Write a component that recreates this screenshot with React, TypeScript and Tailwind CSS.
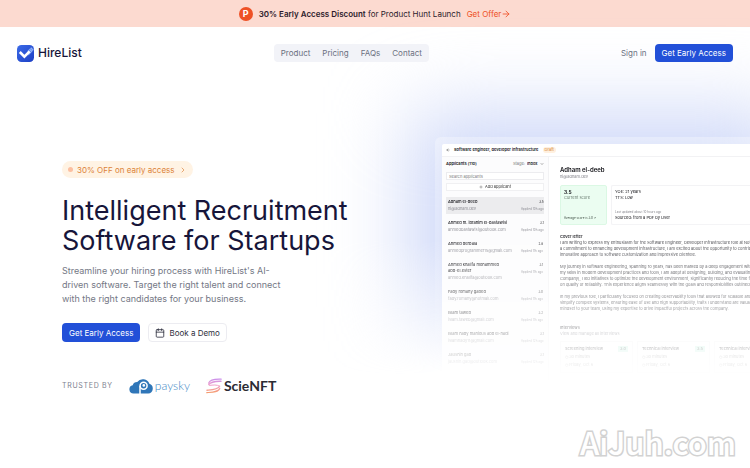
import { ArrowLeft, ArrowRight, Calendar, ChevronDown, ChevronRight, Plus } from "lucide-react";

type Applicant = {
  name: string;
  email: string;
  score: string;
  applied: string;
  active?: boolean;
};

const navLinks = ["Product", "Pricing", "FAQs", "Contact"];

const applicants: Applicant[] = [
  { name: "Adham el-deeb", email: "hi@adham.dev", score: "3.5", applied: "Applied 10h ago", active: true },
  { name: "Ahmed m. ibrahim el-bastawisi", email: "ahmedbastawisi@outlook.com", score: "3.1", applied: "Applied 10h ago" },
  { name: "Ahmed derbala", email: "ahmedprogrammer15@gmail.com", score: "2.8", applied: "Applied 11h ago" },
  { name: "Ahmed khalifa mohammed abd-el.ester", email: "ahmed.khalifa@outlook.com", score: "3.1", applied: "Applied 11h ago" },
  { name: "Fady romany gabed", email: "fady.romany@hotmail.com", score: "3.0", applied: "Applied 11h ago" },
  { name: "Islam taweb", email: "islam.taweb@gmail.com", score: "3.2", applied: "Applied 11h ago" },
  { name: "Islam nady manious abd el-hadi", email: "islamnady11@gmail.com", score: "3.1", applied: "Applied 12h ago" },
  { name: "Jaushin gad", email: "jaushin.gad@outlook.com", score: "3.1", applied: "Applied 12h ago" },
];

const coverLetter = [
  [
    "I am writing to express my enthusiasm for the Software Engineer, Developer Infrastructure role at Notion",
    "a commitment to enhancing development infrastructure, I am excited about the opportunity to contribute",
    "innovative approach to software customization and impressive clientele.",
  ],
  [
    "My journey in software engineering, spanning 10 years, has been marked by a deep engagement with",
    "my skills in modern development practices and tools, I am adept at designing, building, and evaluating",
    "Company), I led initiatives to optimize the development environment, significantly reducing the time from",
    "on quality or reliability. This experience aligns seamlessly with the goals and responsibilities outlined for",
  ],
  [
    "In my previous role, I particularly focused on creating observability tools that allowed for scalable and",
    "simplify complex systems, ensuring ease of use and high supportability, traits I understand are valuable",
    "mindset to your team, using my expertise to drive impactful projects across the company.",
  ],
];

const interviews = [
  { title: "Screening interview", score: "3.0" },
  { title: "Technical interview", score: "3.5" },
  { title: "Technical interview", score: "3.5" },
];

function HireListLogo() {
  return (
    <svg viewBox="0 0 17 17" className="size-[17px]" aria-hidden="true">
      <defs>
        <linearGradient id="brand" x1="0" y1="0" x2="1" y2="1">
          <stop offset="0" stopColor="#3b6be8" />
          <stop offset="1" stopColor="#1d3fc4" />
        </linearGradient>
      </defs>
      <rect width="17" height="17" rx="4.5" fill="url(#brand)" />
      <path d="M10.5 6 14.2 2.2 16.8 4.8 11.5 10.5z" fill="#8fb0f7" />
      <path d="M2.8 7 7.4 11.6 12.6 6.4" fill="none" stroke="#fff" strokeWidth="2.6" />
      <path d="M12.6 3l2.6 2.6M11.3 4.4l2.6 2.6" stroke="#3b6be8" strokeWidth=".6" />
    </svg>
  );
}

function PayskyLogo() {
  return (
    <div className="flex items-center gap-0.5 text-[#3c86c4]">
      <svg viewBox="0 0 24 15" className="h-[15px] w-6" aria-hidden="true">
        <path
          d="M4.5 14.5a4.2 4.2 0 0 1-.8-8.3A4.6 4.6 0 0 1 8.2 3 7 7 0 0 1 20.4 4.8a5 5 0 0 1-1.2 9.7z"
          fill="#2f76b8"
        />
        <path d="M11 15V6.8" stroke="#fff" strokeWidth="1.5" />
        <circle cx="14.6" cy="6.8" r="3.5" fill="none" stroke="#fff" strokeWidth="1.5" />
        <circle cx="14.8" cy="6.4" r="1.3" fill="#fff" />
      </svg>
      <span className="font-['Lato',sans-serif] text-[12px] leading-4 font-light">paysky</span>
    </div>
  );
}

function ScieNftLogo() {
  return (
    <div className="flex items-center gap-0.5 text-[#2b2b33]">
      <svg viewBox="0 0 16 16" className="size-4" fill="none" aria-hidden="true">
        <defs>
          <linearGradient id="swoosh" x1="0" y1="0" x2="0" y2="16" gradientUnits="userSpaceOnUse">
            <stop offset="0" stopColor="#c58cf0" />
            <stop offset=".5" stopColor="#f3a0c4" />
            <stop offset="1" stopColor="#f59a5c" />
          </linearGradient>
        </defs>
        <g stroke="url(#swoosh)" strokeLinecap="round">
          <path d="M15.2 1.2C10 1 4 1 2.600 5.200" strokeWidth="1.2" />
          <path d="M15 3.2C10.5 3.4 5 3.3 2.800 6.600" strokeWidth="1.4" />
          <path d="M3.500 7.400C7 7 11 6.400 13.600 8.200" strokeWidth="1" />
          <path d="M13.6 8.2C12 11.6 6 11.8 1 12.2" strokeWidth="1.4" />
          <path d="M13.8 10.2C12.5 14.2 6 14.2.8 14.6" strokeWidth="1.2" />
        </g>
      </svg>
      <span className="font-['Lato',sans-serif] text-[14px] leading-4 font-bold">ScieNFT</span>
    </div>
  );
}

function Banner() {
  return (
    <div className="flex h-[27px] items-center justify-center bg-[#fcdad0] text-[8px] text-[#2d1a2b]">
      <span className="mr-1.5 flex size-3.5 items-center justify-center rounded-full bg-[#ee5126] text-[9px] font-bold text-white">
        P
      </span>
      <p>
        <strong className="font-semibold">30% Early Access Discount</strong> for Product Hunt Launch
      </p>
      <a href="#offer" className="ml-1.5 flex items-center text-[#ee5126]">
        Get Offer <ArrowRight className="size-2.5" />
      </a>
    </div>
  );
}

function Header() {
  return (
    <header className="relative z-10 flex h-[52px] items-center justify-between px-[17px] text-[8px] text-[#6b7080]">
      <a href="#home" className="flex items-center gap-1 text-[12px] font-medium text-[#17153a]">
        <HireListLogo />
        HireList
      </a>
      <nav className="flex h-[18px] items-center gap-3 rounded-sm bg-[#f2f3f8] px-[7px]">
        {navLinks.map((link) => (
          <a key={link} href={`#${link.toLowerCase()}`}>
            {link}
          </a>
        ))}
      </nav>
      <div className="flex items-center gap-2">
        <a href="#signin">Sign in</a>
        <button className="h-[18px] rounded-sm bg-[#2250d8] px-[7px] text-white">Get Early Access</button>
      </div>
    </header>
  );
}

function HeroCopy() {
  return (
    <section className="relative z-10 flex flex-col items-start pt-6">
      <a
        href="#offer"
        className="flex h-[17px] items-center gap-1 rounded-full bg-[#fff3e4] px-1.5 text-[8px] text-[#dc8238]"
      >
        <span className="size-[5px] rounded-full bg-[#fcbfa0]" />
        30% OFF on early access
        <ChevronRight className="size-2" />
      </a>
      <h1 className="mt-[18px] text-[27px] leading-[30px] text-[#17153a]">
        Intelligent Recruitment
        <br />
        Software for Startups
      </h1>
      <p className="mt-2 text-[9px] leading-[14px] text-[#747885]">
        Streamline your hiring process with HireList's AI-
        <br />
        driven software. Target the right talent and connect
        <br />
        with the right candidates for your business.
      </p>
      <div className="mt-[17px] flex gap-2 text-[8px]">
        <button className="h-[19px] rounded-sm bg-[#2250d8] px-[7px] text-white">Get Early Access</button>
        <button className="flex h-[19px] items-center gap-1 rounded-sm border border-[#ececf1] bg-white px-1.5 text-[#2f3040]">
          <Calendar className="size-2.5" />
          Book a Demo
        </button>
      </div>
      <div className="mt-9 flex items-center gap-4">
        <span className="text-[7px] tracking-widest text-[#7d818f]">TRUSTED BY</span>
        <PayskyLogo />
        <ScieNftLogo />
      </div>
    </section>
  );
}

function Sidebar() {
  return (
    <aside className="w-[107px] shrink-0 border-r border-[#f2f2f4] bg-[#fcfcfd] px-1 pt-1">
      <div className="flex items-center justify-between">
        <h2 className="font-semibold">Applicants (110)</h2>
        <label className="flex items-center text-[#777]">
          Stage:
          <select className="appearance-none px-0.5 font-medium text-black">
            <option>Inbox</option>
          </select>
          <ChevronDown className="size-1 text-black" />
        </label>
      </div>
      <input
        aria-label="Search applicants"
        placeholder="Search applicants"
        className="mt-[5px] block h-2 w-full border border-[#ececef] bg-white px-0.5 placeholder:text-[#777]"
      />
      <button className="mt-[3px] flex h-2 w-full items-center justify-center gap-0.5 border border-[#f0f0f2] bg-white text-[#333]">
        <Plus className="size-1" /> Add applicant
      </button>
      <ul className="mt-1.5 flex flex-col gap-1">
        {applicants.map((person) => (
          <li
            key={person.name}
            className={`flex justify-between gap-3 px-0.5 py-[2px] ${person.active ? "bg-[#ececee]" : ""}`}
          >
            <div className="w-[61px] shrink-0">
              <p className="font-medium">{person.name}</p>
              <p className="mt-px text-[#8d8d94]">{person.email}</p>
            </div>
            <div className="shrink-0 text-right text-[3px]">
              <p>{person.score}</p>
              <p className="mt-px text-[#8d8d94]">{person.applied}</p>
            </div>
          </li>
        ))}
      </ul>
    </aside>
  );
}

function ApplicantDetail() {
  return (
    <article className="min-w-0 flex-1 overflow-hidden pt-[9px] pl-[11px] whitespace-nowrap">
      <h2 className="text-[6px] leading-2 font-semibold">Adham el-deeb</h2>
      <p className="text-[#85858c]">hi@adham.dev</p>
      <div className="mt-[5px] flex h-10 gap-1">
        <div className="flex w-[47px] shrink-0 flex-col rounded-xs border border-[#dbf8e4] bg-[#ebfdf1] p-[3px]">
          <strong className="text-[5px] font-semibold">3.5</strong>
          <span className="text-[#6b7d72]">Current score</span>
          <span className="mt-auto text-[3px] text-[#37463c]">Average score is 3.0 ↗</span>
        </div>
        <div className="flex flex-1 flex-col rounded-l-xs border border-r-0 border-[#f3f3f5] p-[3px]">
          <span>YOE: 21 years</span>
          <span>TTS: Low</span>
          <span className="mt-auto text-[3px] text-[#85858c]">Last updated about 10 hours ago</span>
          <span>Sourced: from a PDF by User</span>
        </div>
      </div>
      <h3 className="mt-[9px] font-semibold">Cover letter</h3>
      <div className="flex flex-col gap-1.5 text-[#303036]">
        {coverLetter.map((paragraph) => (
          <p key={paragraph[0]}>
            {paragraph.map((line) => (
              <span key={line} className="block">
                {line}
              </span>
            ))}
          </p>
        ))}
      </div>
      <h3 className="mt-[13px] font-medium">Interviews</h3>
      <p className="text-[#85858c]">View and manage all interviews</p>
      <div className="mt-1 flex gap-1">
        {interviews.map((interview, i) => (
          <div key={i} className="flex w-[73px] shrink-0 flex-col gap-0.5 border border-[#f4f4f5] p-1">
            <div className="flex justify-between">
              <span className="font-medium">{interview.title}</span>
              <span className="bg-[#c9f3e3] px-0.5">{interview.score}</span>
            </div>
            <span className="text-[#777]">◷ 30 minutes</span>
            <span className="text-[#777]">◷ Friday, Oct 6</span>
          </div>
        ))}
      </div>
    </article>
  );
}

function ProductPreview() {
  return (
    <section className="relative min-w-0">
      {/* soft glow behind the app window, gone before its lower edge */}
      <div className="absolute -top-32 right-0 bottom-0 -left-32 overflow-hidden mask-linear-180 mask-linear-from-60% mask-linear-to-95%">
        <div className="absolute top-26 -right-10 bottom-0 left-26 bg-[#cdd7f8] blur-[40px]" />
      </div>
      <div className="relative rounded-tl-md bg-linear-to-b from-white/30 to-transparent pt-[7px] pl-[7px]">
        <div className="h-[236px] overflow-hidden rounded-tl-xs bg-white text-[4px] leading-[6px] text-[#111116]">
          <div className="flex h-[13px] items-center gap-1 border-b border-[#f2f2f4] px-1 font-semibold">
            <ArrowLeft className="size-1" />
            <span>Software engineer, developer infrastructure</span>
            <span className="rounded-full bg-[#fff0df] px-0.5 font-normal text-[#d68132]">Draft</span>
          </div>
          <div className="flex h-full mask-linear-180 mask-linear-from-25% mask-linear-to-98%">
            <Sidebar />
            <ApplicantDetail />
          </div>
        </div>
      </div>
    </section>
  );
}

export default function App() {
  return (
    <div className="relative min-h-screen overflow-hidden bg-white font-['Inter',sans-serif]">
      <Banner />
      <Header />
      <main className="grid grid-cols-[373px_minmax(0,1fr)] pt-[58px] pl-[62px]">
        <HeroCopy />
        <ProductPreview />
      </main>
      <span className="absolute right-[14px] bottom-2 font-['Noto_Sans_CJK_SC',sans-serif] text-[31px] leading-9 font-medium text-white [-webkit-text-stroke:3px_#d2d2d2] [paint-order:stroke_fill]">
        AiJuh.com
      </span>
    </div>
  );
}
